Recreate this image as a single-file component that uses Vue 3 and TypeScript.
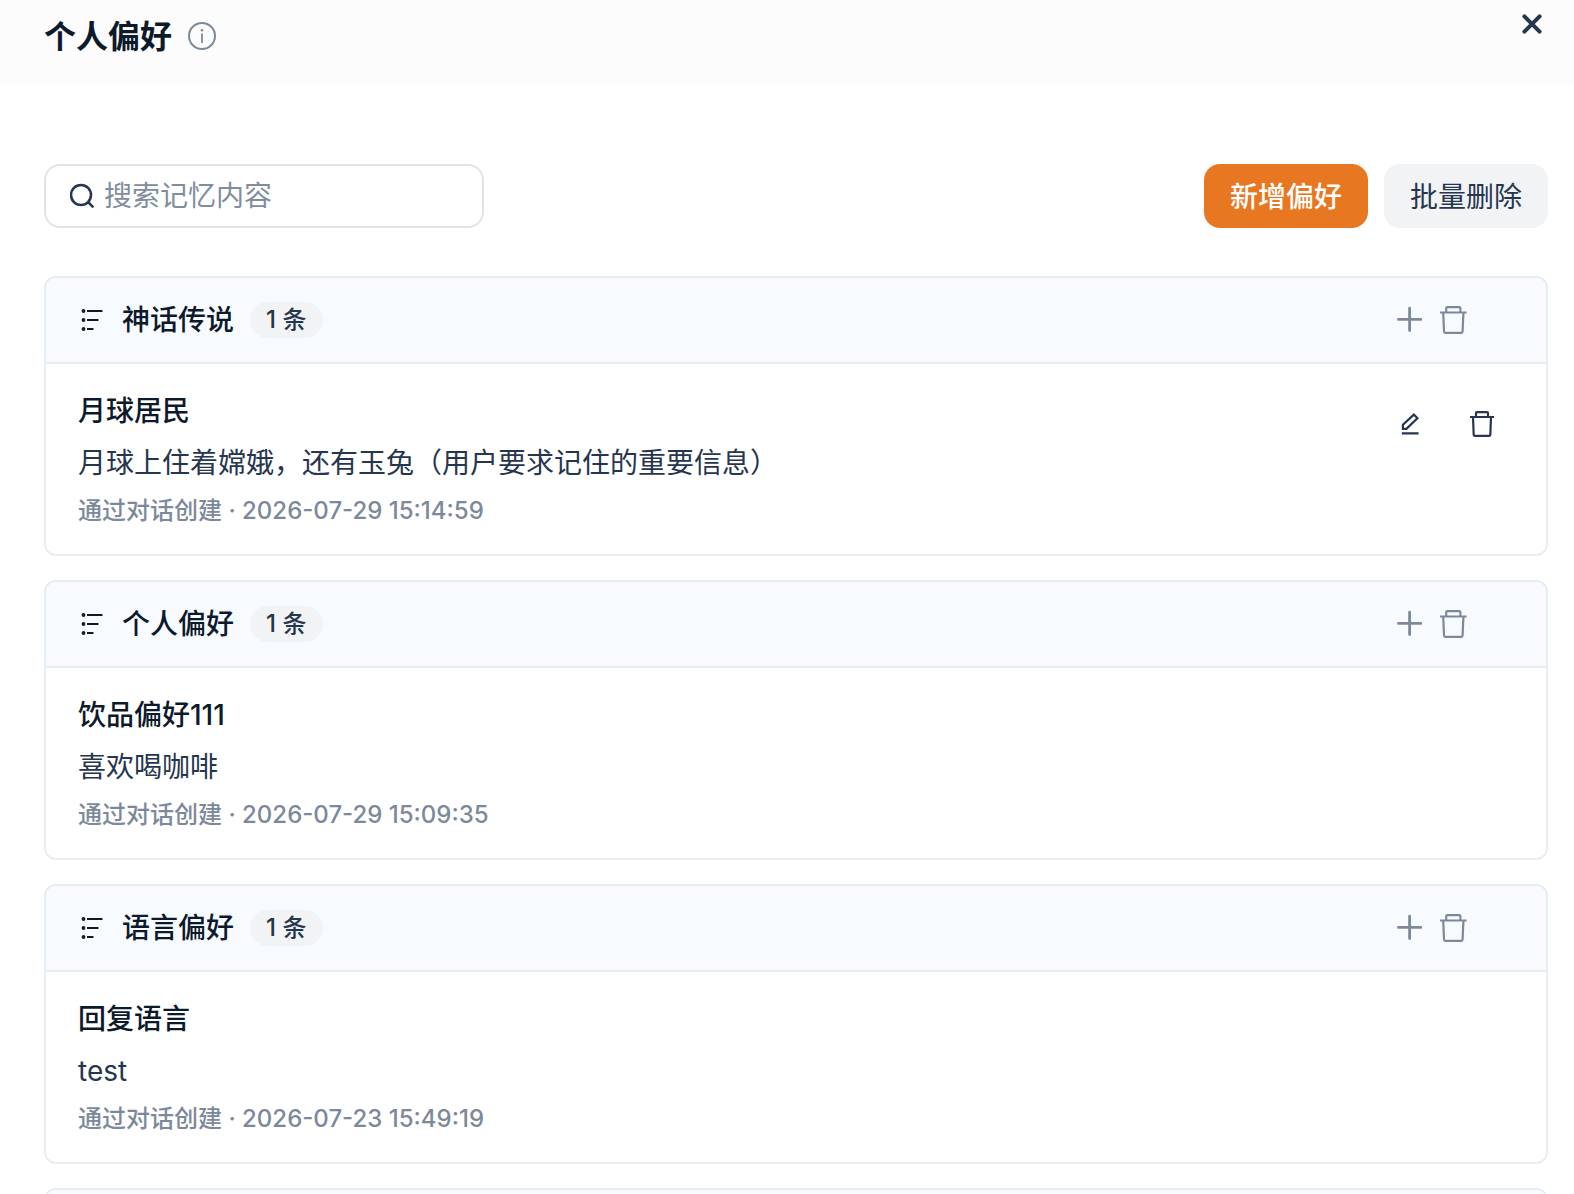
<script setup lang="ts">
import { ref } from 'vue'

interface Memory {
  title: string
  content: string
  meta: string
  active?: boolean
}

interface Group {
  name: string
  items: Memory[]
}

const keyword = ref('')

const groups: Group[] = [
  {
    name: '神话传说',
    items: [
      {
        title: '月球居民',
        content: '月球上住着嫦娥，还有玉兔（用户要求记住的重要信息）',
        meta: '通过对话创建 · 2026-07-29 15:14:59',
        active: true,
      },
    ],
  },
  {
    name: '个人偏好',
    items: [
      { title: '饮品偏好111', content: '喜欢喝咖啡', meta: '通过对话创建 · 2026-07-29 15:09:35' },
    ],
  },
  {
    name: '语言偏好',
    items: [
      { title: '回复语言', content: 'test', meta: '通过对话创建 · 2026-07-23 15:49:19' },
    ],
  },
]
</script>

<template>
  <div class="panel">
    <header class="panel-head">
      <h1>个人偏好</h1>
      <button class="icon-btn muted" type="button" aria-label="说明">
        <svg width="28" height="28" viewBox="0 0 28 28" fill="none" stroke="currentColor">
          <circle cx="14" cy="14" r="13" stroke-width="2" />
          <path d="M14 11.5V21" stroke-width="1.8" />
          <circle cx="14" cy="8.3" r="1.3" fill="currentColor" stroke="none" />
        </svg>
      </button>
      <button class="icon-btn close" type="button" aria-label="关闭">
        <svg width="20" height="20" viewBox="0 0 20 20" fill="none" stroke="currentColor" stroke-width="4" stroke-linecap="round">
          <path d="M2.4 2.4 17.6 17.6M17.6 2.4 2.4 17.6" />
        </svg>
      </button>
    </header>

    <main class="content">
      <div class="toolbar">
        <label class="search">
          <svg width="26" height="26" viewBox="0 0 26 26" fill="none" stroke="currentColor" stroke-width="2.6" stroke-linecap="round">
            <circle cx="11" cy="12" r="10" />
            <path d="M18.4 19.4 22.6 23.6" />
          </svg>
          <input v-model="keyword" type="text" placeholder="搜索记忆内容" aria-label="搜索记忆内容" />
        </label>
        <div class="buttons">
          <button class="btn primary" type="button">新增偏好</button>
          <button class="btn" type="button">批量删除</button>
        </div>
      </div>

      <section v-for="group in groups" :key="group.name" class="card">
        <div class="card-head">
          <svg class="list-icon" width="24" height="24" viewBox="0 0 24 24" fill="none" stroke="currentColor" stroke-width="2.2">
            <path d="M7 3H22.5M7 12H18.5M7 21H13.5" />
            <g fill="currentColor" stroke="none">
              <circle cx="3.5" cy="3" r="1.9" />
              <circle cx="3.5" cy="12" r="1.9" />
              <circle cx="3.5" cy="21" r="1.9" />
            </g>
          </svg>
          <h2>{{ group.name }}</h2>
          <span class="badge">{{ group.items.length }} 条</span>
          <div class="head-actions">
            <button class="icon-btn muted" type="button" aria-label="新增">
              <svg width="28" height="28" viewBox="0 0 28 28" fill="none" stroke="currentColor" stroke-width="2.8" stroke-linecap="round">
                <path d="M13.6 2.2V24.6M2.4 13.4H24.8" />
              </svg>
            </button>
            <button class="icon-btn muted" type="button" aria-label="删除分组">
              <svg width="28" height="28" viewBox="0 0 28 28" fill="none" stroke="currentColor" stroke-width="2.2" stroke-linejoin="round">
                <path d="M0 6.5H26.6M6.2 6.5V2.2Q6.2 1.1 7.4 1.1H19.2Q20.4 1.1 20.4 2.2V6.5M3.2 6.5 4 25.4Q4.1 26.9 5.5 26.9H21.1Q22.5 26.9 22.6 25.4L23.4 6.5" />
              </svg>
            </button>
          </div>
        </div>
        <article v-for="item in group.items" :key="item.title" class="item">
          <div class="item-text">
            <h3>{{ item.title }}</h3>
            <p>{{ item.content }}</p>
            <small>{{ item.meta }}</small>
          </div>
          <div v-if="item.active" class="item-actions">
            <button class="icon-btn" type="button" aria-label="编辑">
              <svg width="24" height="24" viewBox="0 0 24 24" fill="none" stroke="currentColor" stroke-width="2.2">
                <path d="M4.9 16.8V12.8L15.9 2.6 19.4 6.2 8.4 16.8ZM3.8 21.3H20.6" />
              </svg>
            </button>
            <button class="icon-btn" type="button" aria-label="删除">
              <svg width="24" height="26" viewBox="0 0 24 26" fill="none" stroke="currentColor" stroke-width="2.2" stroke-linejoin="round">
                <path d="M0 6H24M6 6V2Q6 1.1 7 1.1H17Q18 1.1 18 2V6M3 6 3.7 23.9Q3.8 24.9 4.8 24.9H19.2Q20.2 24.9 20.3 23.9L21 6" />
              </svg>
            </button>
          </div>
        </article>
      </section>
      <section class="card">
        <div class="card-head"></div>
      </section>
    </main>
  </div>
</template>

<style>
body {
  margin: 0;
  background: #fff;
}
</style>

<style scoped>
.panel {
  box-sizing: border-box;
  height: 100vh;
  overflow: hidden;
  color: #26364f;
  font-family: Inter, 'Noto Sans CJK SC', sans-serif;
  font-size: 28px;
}

h1,
h2,
h3,
p {
  margin: 0;
}

button,
input {
  padding: 0;
  border: 0;
  background: none;
  color: inherit;
  font: inherit;
}

svg {
  display: block;
}

.icon-btn {
  display: flex;
  cursor: pointer;
}

.muted {
  color: #7d899a;
}

.panel-head {
  box-sizing: border-box;
  display: flex;
  align-items: flex-start;
  gap: 16px;
  height: 84px;
  padding: 14px 32px 0 44px;
  background: #fcfcfc;
}

.panel-head h1 {
  color: #0d1a2b;
  font-size: 32px;
  font-weight: 600;
  line-height: 46px;
}

.panel-head .muted {
  padding-top: 8px;
}

.close {
  margin-left: auto;
}

.content {
  display: flex;
  flex-direction: column;
  gap: 24px;
  padding: 80px 26px 0 44px;
}

.toolbar {
  display: flex;
  justify-content: space-between;
  margin-bottom: 24px;
}

.search {
  box-sizing: border-box;
  display: flex;
  align-items: center;
  gap: 8px;
  width: 440px;
  height: 64px;
  padding: 0 24px;
  border: 2px solid #dfe3ea;
  border-radius: 16px;
}

.search input {
  flex: 1;
  min-width: 0;
  height: 44px;
  outline: none;
}

.search input::placeholder {
  color: #818d9e;
  opacity: 1;
}

.buttons {
  display: flex;
  gap: 16px;
}

.btn {
  height: 64px;
  padding: 0 26px 2px;
  border-radius: 16px;
  background: #f2f3f5;
  cursor: pointer;
}

.primary {
  background: #e87722;
  color: #fff;
  font-weight: 500;
}

.card {
  border: 2px solid #e8edf2;
  border-radius: 12px;
  overflow: hidden;
}

.card-head {
  display: flex;
  align-items: center;
  height: 84px;
  padding: 0 78px 0 34px;
  border-bottom: 2px solid #e8edf2;
  background: #f7faff;
  color: #0d1a2b;
}

.card-head h2 {
  margin: 0 16px 0 18px;
  font-size: 28px;
  font-weight: 500;
  line-height: 44px;
}

.badge {
  padding: 0 17px 0 16px;
  border-radius: 18px;
  background: #f2f3f5;
  color: #26364f;
  font-size: 24px;
  font-weight: 500;
  line-height: 36px;
}

.head-actions {
  display: flex;
  gap: 16px;
  margin-left: auto;
}

.item {
  display: flex;
  justify-content: space-between;
  padding: 25px 52px 25px 32px;
}

.item-text {
  display: flex;
  flex-direction: column;
  gap: 8px;
}

.item h3 {
  color: #0d1a2b;
  font-size: 28px;
  font-weight: 500;
  line-height: 44px;
}

.item p {
  line-height: 44px;
}

.item small {
  color: #7d899a;
  font-size: 24px;
  font-weight: 500;
  line-height: 36px;
}

.item-actions {
  display: flex;
  align-items: center;
  gap: 48px;
  height: 70px;
}
</style>
